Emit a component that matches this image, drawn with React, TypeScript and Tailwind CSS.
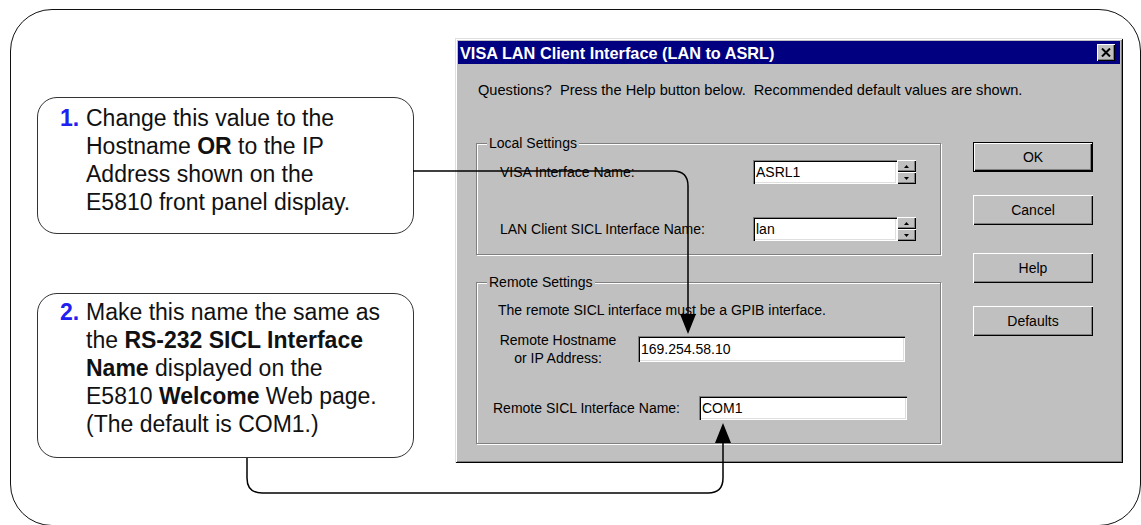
import React from "react";

const SANS = '"Liberation Sans", Arial, sans-serif';

function Raised({ className = "", children }: { className?: string; children?: React.ReactNode }) {
  return (
    <div
      className={
        "bg-[#c0c0c0] shadow-[inset_1px_1px_0_#fff,inset_-1px_-1px_0_#000,inset_-2px_-2px_0_#808080] flex items-center justify-center " +
        className
      }
    >
      {children}
    </div>
  );
}

function Field({ className = "", value }: { className?: string; value: string }) {
  return (
    <div
      className={
        "bg-white shadow-[inset_1px_1px_0_#808080,inset_2px_2px_0_#000,inset_-1px_-1px_0_#fff,inset_-2px_-2px_0_#dfdfdf] flex items-center pl-[3px] pt-[1px] text-[14px] text-black " +
        className
      }
    >
      {value}
    </div>
  );
}

function Spin() {
  return (
    <div className="w-[19px] h-[24px] flex flex-col">
      <Raised className="h-[12px] w-[19px]">
        <svg width="5" height="3" viewBox="0 0 5 3">
          <polygon points="2.5,0 5,3 0,3" fill="#000" />
        </svg>
      </Raised>
      <Raised className="h-[12px] w-[19px]">
        <svg width="5" height="3" viewBox="0 0 5 3">
          <polygon points="0,0 5,0 2.5,3" fill="#000" />
        </svg>
      </Raised>
    </div>
  );
}

function Group({ label, className = "", children }: { label: string; className?: string; children?: React.ReactNode }) {
  return (
    <div
      className={
        "relative border border-[#808080] shadow-[1px_1px_0_#fff,inset_1px_1px_0_#fff] " + className
      }
    >
      <span className="absolute left-[10px] top-[-9px] bg-[#c0c0c0] px-[2px] leading-[16px] text-[14px]">{label}</span>
      {children}
    </div>
  );
}

function Button({ label, isDefault = false, className = "" }: { label: string; isDefault?: boolean; className?: string }) {
  if (isDefault) {
    return (
      <div className={"w-[120px] h-[30px] border border-black " + className}>
        <Raised className="w-full h-full text-[14px]">{label}</Raised>
      </div>
    );
  }
  return <Raised className={"w-[120px] h-[30px] text-[14px] " + className}>{label}</Raised>;
}

function Dialog() {
  return (
    <div
      className="ml-[41px] mt-[28px] w-[668px] h-[425px] bg-[#c0c0c0] p-[3px] text-black shadow-[inset_1px_1px_0_#dfdfdf,inset_-1px_-1px_0_#000,inset_2px_2px_0_#fff,inset_-2px_-2px_0_#808080] shrink-0"
      style={{ fontFamily: SANS }}
    >
      <div className="h-[23px] bg-[#000080] flex items-center justify-between pl-[2px] pr-[5px]">
        <span className="text-white font-bold text-[16.3px] leading-[18px]">VISA LAN Client Interface (LAN to ASRL)</span>
        <Raised className="w-[18px] h-[17px]">
          <svg width="10" height="9" viewBox="0 0 10 9">
            <path d="M1 0.5 L9 8.5 M9 0.5 L1 8.5" stroke="#000" strokeWidth="2" />
          </svg>
        </Raised>
      </div>
      <div className="pl-[20px] mt-[18px] text-[14.6px] leading-[16px] whitespace-pre">
        {"Questions?  Press the Help button below.  Recommended default values are shown."}
      </div>
      <div className="flex items-start pl-[18px] mt-[44px]">
        <div className="w-[465px] flex flex-col mt-[1px]">
          <Group label="Local Settings" className="h-[112px]">
            <div className="pl-[23px] pt-[16px] text-[14px]">
              <div className="flex items-center h-[24px]">
                <span className="w-[253px]">VISA Interface Name:</span>
                <Field className="w-[144px] h-[24px]" value="ASRL1" />
                <Spin />
              </div>
              <div className="flex items-center h-[24px] mt-[33px]">
                <span className="w-[253px]">LAN Client SICL Interface Name:</span>
                <Field className="w-[144px] h-[24px]" value="lan" />
                <Spin />
              </div>
            </div>
          </Group>
          <Group label="Remote Settings" className="h-[162px] mt-[27px]">
            <div className="pl-[16px] pt-[19px] text-[14px]">
              <div className="pl-[5px] leading-[16px]">The remote SICL interface must be a GPIB interface.</div>
              <div className="pl-[5px] mt-[13px] flex items-center h-[36px]">
                <div className="w-[120px] text-center leading-[18px]">
                  Remote Hostname
                  <br />
                  or IP Address:
                </div>
                <Field className="ml-[20px] w-[267px] h-[26px]" value="169.254.58.10" />
              </div>
              <div className="mt-[29px] flex items-center h-[24px]">
                <span className="w-[206px]">Remote SICL Interface Name:</span>
                <Field className="w-[208px] h-[24px]" value="COM1" />
              </div>
            </div>
          </Group>
        </div>
        <div className="ml-[32px] w-[120px] flex flex-col">
          <Button label="OK" isDefault />
          <Button label="Cancel" className="mt-[23px]" />
          <Button label="Help" className="mt-[28px]" />
          <Button label="Defaults" className="mt-[23px]" />
        </div>
      </div>
    </div>
  );
}

export default function App() {
  return (
    <div
      className="relative w-[1141px] h-[525px] overflow-hidden bg-white pl-[10px] pt-[9px] text-[#111]"
      style={{ fontFamily: SANS }}
    >
      <div className="w-[1131px] h-[517px] rounded-[42px] border border-[#111] flex items-start pl-[26px]">
        <div className="mt-[87px] flex flex-col w-[377px] shrink-0 text-[23px] leading-[28px]">
          <div className="h-[137px] rounded-[20px] border border-[#333] pt-[6px] pl-[22px] flex">
            <span className="w-[26px] shrink-0 font-bold text-[#2020f0]">1.</span>
            <div>
              Change this value to the
              <br />
              Hostname <b>OR</b> to the IP
              <br />
              Address shown on the
              <br />
              E5810 front panel display.
            </div>
          </div>
          <div className="h-[165px] mt-[59px] rounded-[20px] border border-[#333] pt-[4px] pl-[22px] flex">
            <span className="w-[26px] shrink-0 font-bold text-[#2020f0]">2.</span>
            <div>
              Make this name the same as
              <br />
              the <b>RS-232 SICL Interface</b>
              <br />
              <b>Name</b> displayed on the
              <br />
              E5810 <b>Welcome</b> Web page.
              <br />
              (The default is COM1.)
            </div>
          </div>
        </div>
        <Dialog />
      </div>
      <svg
        className="absolute left-0 top-0 pointer-events-none"
        width="1141"
        height="525"
        viewBox="0 0 1141 525"
      >
        <path d="M413 171 H673 Q688 171 688 186 V318" fill="none" stroke="#000" strokeWidth="1.5" />
        <polygon points="680,314 696,314 688,334" fill="#000" />
        <path d="M247 458 V478 Q247 493 262 493 H708 Q723 493 723 478 V442" fill="none" stroke="#000" strokeWidth="1.5" />
        <polygon points="715,443 731,443 723,423" fill="#000" />
      </svg>
    </div>
  );
}
